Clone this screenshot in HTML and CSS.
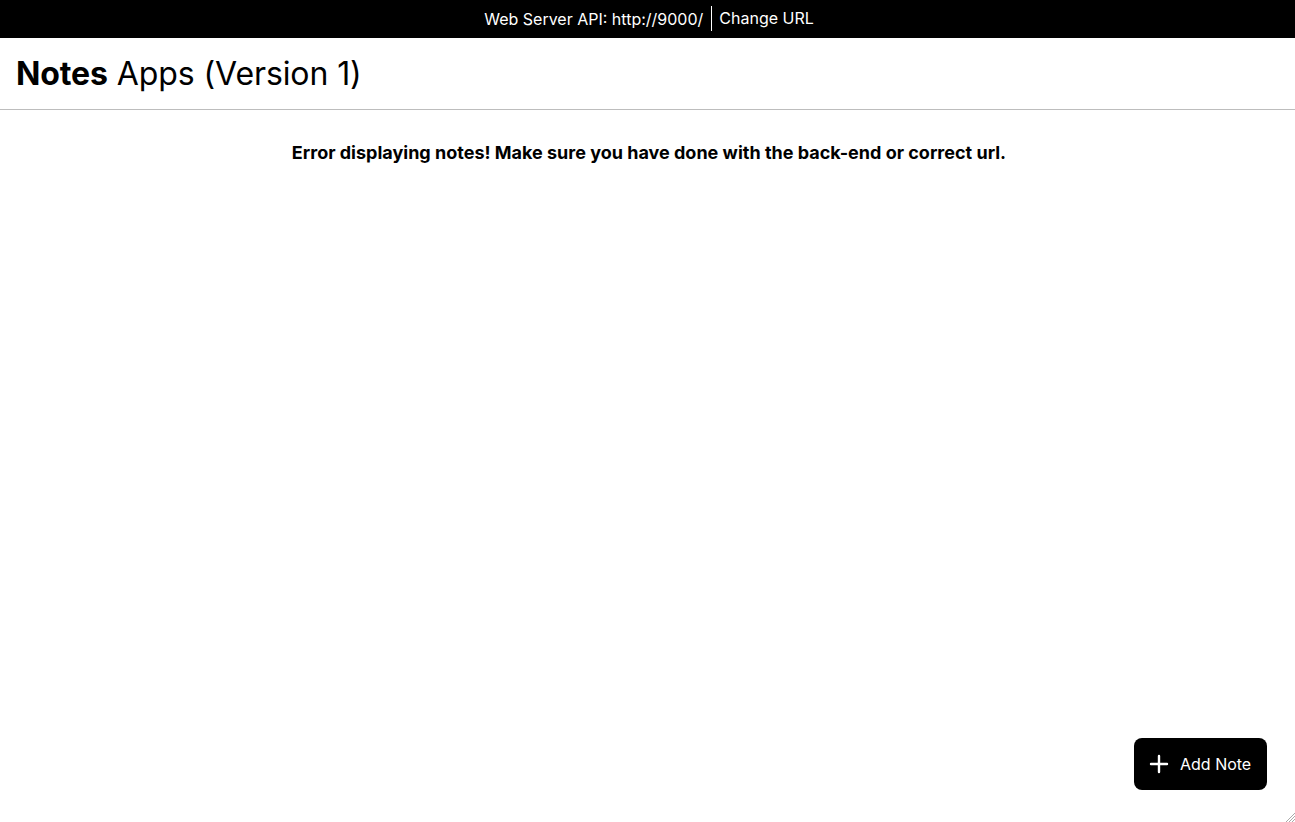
FILE: index.html
```html
<!DOCTYPE html>
<html lang="en">
<head>
<meta charset="utf-8">
<title>Notes Apps</title>
<link rel="stylesheet" href="styles.css">
</head>
<body>
<div class="topbar">
  <span class="api">Web Server API: http://9000/</span>
  <button class="change-url">Change URL</button>
</div>
<header class="app-header">
  <h1 class="title"><strong>Notes</strong> Apps (Version 1)</h1>
</header>
<main class="content">
  <p class="error">Error displaying notes! Make sure you have done with the back-end or correct url.</p>
</main>
<button class="add-note">
  <svg class="plus" width="20" height="20" viewBox="0 0 20 20" aria-hidden="true">
    <path d="M10 2v16M2 10h16" stroke="#fff" stroke-width="2.4" stroke-linecap="round" fill="none"/>
  </svg>
  <span>Add Note</span>
</button>
<svg class="grip" width="10" height="10" viewBox="0 0 10 10" aria-hidden="true">
  <path d="M10 1L1 10M10 4L4 10M10 7L7 10" stroke="#aaa" stroke-width="1" fill="none"/>
</svg>
</body>
</html>
```
FILE: styles.css
```css
* { box-sizing: border-box; }
html, body { height: 100%; }
body {
  margin: 0;
  font-family: Inter, "Noto Sans", sans-serif;
  color: #000;
  background: #fff;
}
.topbar {
  height: 38px;
  background: #000;
  color: #fff;
  display: flex;
  align-items: center;
  justify-content: center;
  font-size: 16px;
  padding: 0 0 1px 3px;
}
.change-url {
  background: none;
  border: none;
  border-left: 1px solid #fff;
  color: #fff;
  font: inherit;
  font-size: 16px;
  padding: 3px 0 3px 7px;
  margin-left: 8px;
  line-height: 19px;
}
.app-header {
  padding: 17px 16px 16px 16px;
  border-bottom: 1px solid #bdbdbd;
}
.title {
  margin: 0;
  font-size: 32px;
  font-weight: 400;
  line-height: 38px;
  letter-spacing: -0.1px;
}
.title strong { font-weight: 700; }
.content {
  padding: 32px 14px 33px 17px;
}
.error {
  margin: 0;
  text-align: center;
  font-weight: 700;
  font-size: 18px;
  line-height: 22px;
}
.add-note {
  position: fixed;
  right: 28px;
  bottom: 32px;
  width: 133px;
  height: 52px;
  border: none;
  border-radius: 8px;
  background: #000;
  color: #fff;
  font-family: Inter, "Noto Sans", sans-serif;
  font-size: 16px;
  display: flex;
  align-items: center;
  gap: 11px;
  padding: 0 0 0 15px;
}
.plus { display: block; }
.grip {
  position: fixed;
  right: 0;
  bottom: 0;
}
```
